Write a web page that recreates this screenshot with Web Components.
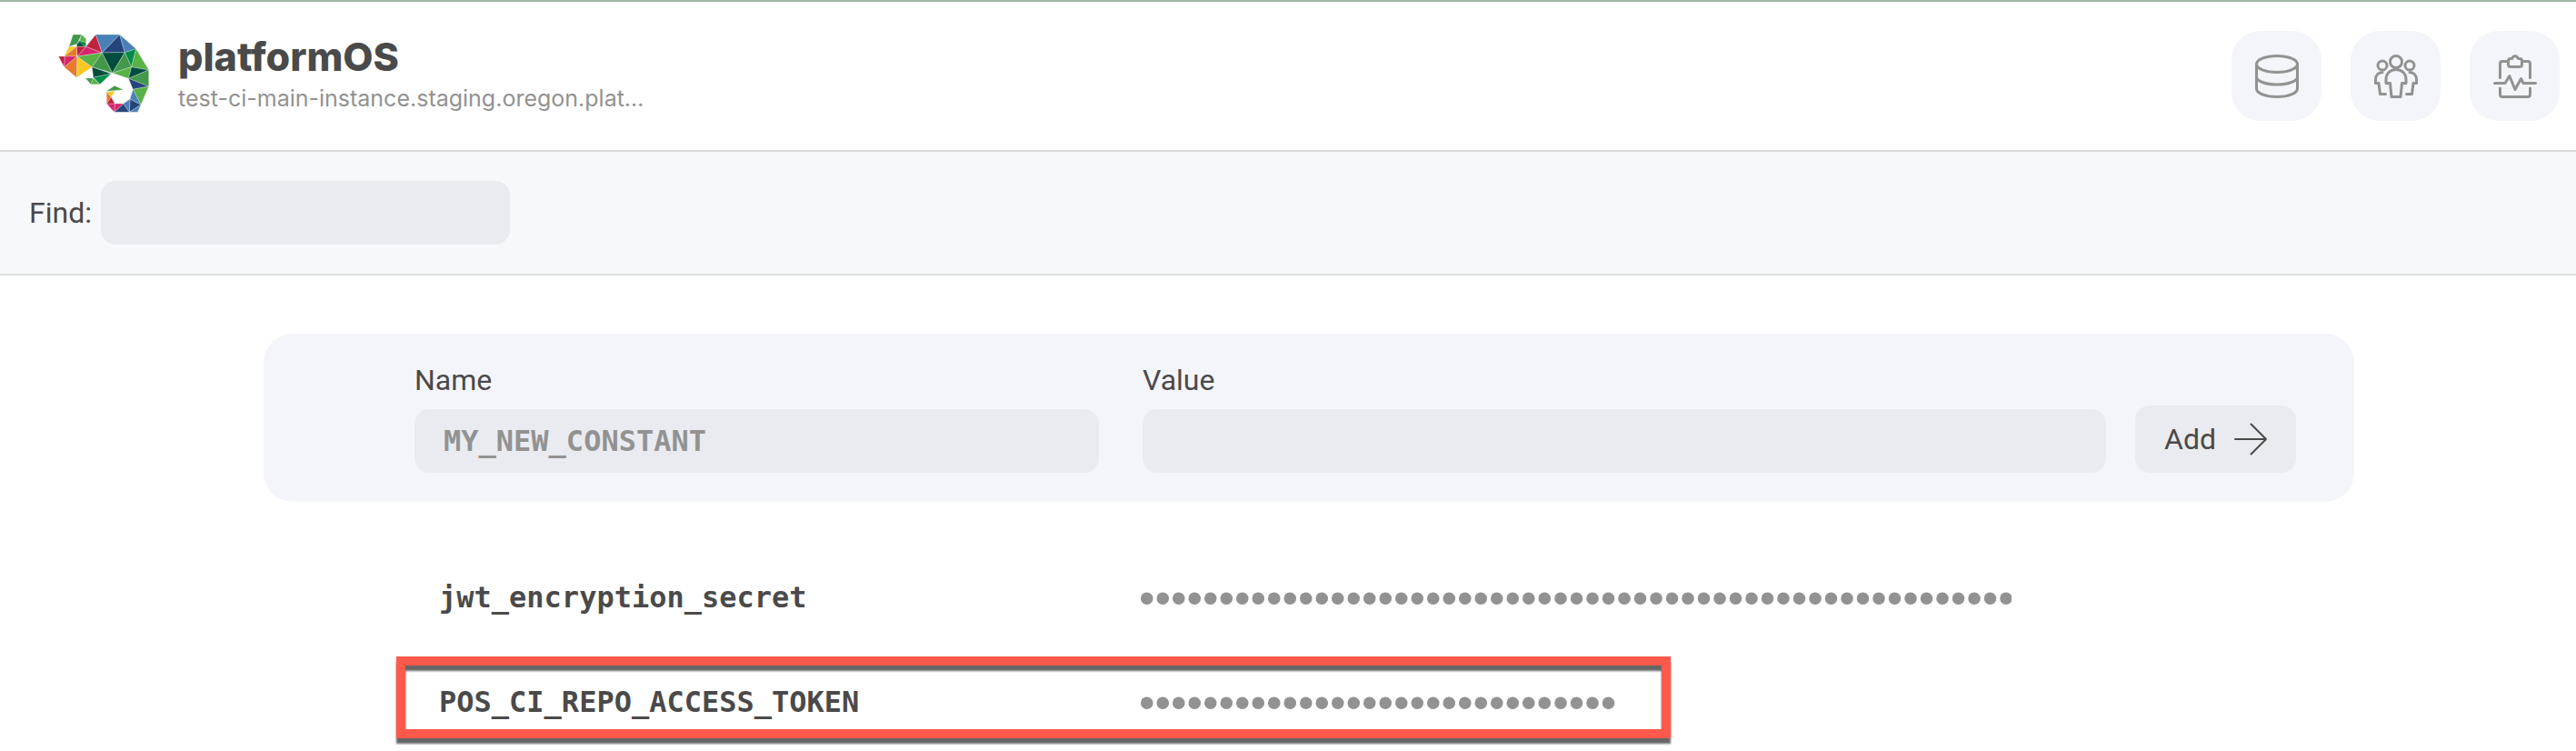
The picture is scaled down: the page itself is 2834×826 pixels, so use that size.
<!DOCTYPE html>
<html lang="en">
<head>
<meta charset="utf-8">
<title>platformOS constants</title>
<style>
  body {
    margin: 0;
    background: #fff;
    color: #4a4a4a;
    font: 32px/40px Roboto, "Liberation Sans", sans-serif;
  }
</style>
</head>
<body>
<constants-app></constants-app>

<template id="app">
  <style>
    :host { display: block; border-top: 2px solid #9fb8a4; }
    main { padding: 64px 244px 0 290px; }
    ul { margin: 0; padding: 48px 0 0; list-style: none; }
  </style>
  <app-header>
    <icon-button label="Database" icon="database"></icon-button>
    <icon-button label="Users" icon="users"></icon-button>
    <icon-button label="Logs" icon="logs"></icon-button>
  </app-header>
  <find-bar></find-bar>
  <main>
    <constant-form></constant-form>
    <ul>
      <constant-row name="jwt_encryption_secret" length="55"></constant-row>
      <constant-row name="POS_CI_REPO_ACCESS_TOKEN" length="30" marked></constant-row>
    </ul>
  </main>
</template>

<template id="header">
  <style>
    :host { display: block; }
    header {
      display: flex; align-items: center; justify-content: space-between;
      height: 163px; padding: 0 18px 0 50px;
      border-bottom: 2px solid #dadddb;
    }
    a { display: flex; align-items: center; gap: 16px; color: inherit; text-decoration: none; }
    svg { display: block; width: 130px; height: 120px; padding-bottom: 6px; stroke: #dfe8e0; stroke-width: 1; stroke-linejoin: round; }
    strong { display: block; font: 800 43px/48px Inter, sans-serif; }
    small { display: block; font: 25px/44px Inter, sans-serif; color: #929292; }
    nav { display: flex; gap: 32px; }
  </style>
  <header>
    <a href="#">
      <svg viewBox="0 0 390 360" aria-hidden="true">
        <path fill="#43984a" d="M91 51H119L105 82 78 91Z"/>
        <path fill="#58b246" d="M119 51L134 65V78L113 71Z"/>
        <path fill="#008c48" d="M113 71L134 78V91L105 78Z"/>
        <path fill="#004d3d" d="M105 80L115 76 130 91H103Z"/>
        <path fill="#f9c825" d="M78 91H103L62 123Z"/>
        <path fill="#e9792b" d="M103 91V123H62Z"/>
        <path fill="#c0223d" d="M103 91H134L105 123Z"/>
        <path fill="#d9236c" d="M134 91L187 111 105 123Z"/>
        <path fill="#c0223d" d="M166 51L187 111 134 91Z"/>
        <path fill="#c0223d" d="M43 123H64L62 158Z"/>
        <path fill="#d9236c" d="M64 123H105L62 158Z"/>
        <path fill="#e9792b" d="M105 123L62 158 103 193Z"/>
        <path fill="#f9c825" d="M105 123L154 158 103 193Z"/>
        <path fill="#4a80b8" d="M166 51H245L187 111Z"/>
        <path fill="#23457b" d="M245 51L262 110 187 111Z"/>
        <path fill="#4a80b8" d="M245 51L299 98 262 110Z"/>
        <path fill="#58b246" d="M105 123L187 111 154 158Z"/>
        <path fill="#43984a" d="M187 111L221 178 154 158Z"/>
        <path fill="#004d3d" d="M187 111L262 110 221 178Z"/>
        <path fill="#43984a" d="M262 110L284 158 221 178Z"/>
        <path fill="#008c48" d="M299 98L284 158 262 110Z"/>
        <path fill="#58b246" d="M299 98L341 168 284 158Z"/>
        <path fill="#58b246" d="M221 178L284 158 274 196Z"/>
        <path fill="#004d3d" d="M284 158L341 168 274 196Z"/>
        <path fill="#43984a" d="M341 168V222L274 196Z"/>
        <path fill="#23457b" d="M274 196L341 222 289 232Z"/>
        <path fill="#58b246" d="M341 222L289 232 315 283Z"/>
        <path fill="#4a80b8" d="M289 232L315 283 279 264Z"/>
        <path fill="#23457b" d="M279 264L315 283 277 307Z"/>
        <path fill="#4a80b8" d="M279 264L257 279 277 307Z"/>
        <path fill="#4a80b8" d="M315 283L304 307H277Z"/>
        <path fill="#23457b" d="M257 279L277 307H227Z"/>
        <path fill="#d9236c" d="M257 279L227 307 229 279Z"/>
        <path fill="#d9236c" d="M202 279H229L227 307Z"/>
        <path fill="#e9792b" d="M202 240L217 257 202 279Z"/>
        <path fill="#c0223d" d="M217 257L229 279H202Z"/>
        <path fill="#f9c825" d="M202 240L230 238 217 257Z"/>
        <path fill="#43984a" d="M202 238L228 220 257 233Z"/>
        <path fill="#004d3d" d="M154 158L217 180 158 193Z"/>
        <path fill="#008c48" d="M217 180L180 215 158 193Z"/>
        <path fill="#43984a" d="M132 195H158L150 215Z"/>
        <path fill="#58b246" d="M158 195L180 215H150Z"/>
      </svg>
      <span>
        <strong>platformOS</strong>
        <small>test-ci-main-instance.staging.oregon.plat…</small>
      </span>
    </a>
    <nav><slot></slot></nav>
  </header>
</template>

<template id="icon-button">
  <style>
    :host { display: block; }
    button {
      display: grid; place-items: center; width: 99px; height: 99px; padding: 0;
      border: 0; border-radius: 32px; background: #f4f5fb; color: #929292;
    }
    svg { display: none; width: 48px; height: 48px; fill: none; stroke: currentColor; stroke-width: 3; stroke-linecap: round; stroke-linejoin: round; }
    :host([icon="database"]) .database,
    :host([icon="users"]) .users,
    :host([icon="logs"]) .logs { display: block; }
  </style>
  <button type="button">
    <svg class="database" viewBox="0 0 48 48" aria-hidden="true">
      <ellipse cx="24" cy="10.500" rx="22.500" ry="9"/>
      <path d="M1.500 10.500V37.500C1.500 42.500 11.500 46.500 24 46.500S46.500 42.500 46.500 37.500V10.500M1.500 24.500C1.500 29.200 11.500 33 24 33S46.500 29.200 46.500 24.500"/>
    </svg>
    <svg class="users" viewBox="0 0 48 48" aria-hidden="true">
      <circle cx="24" cy="8" r="6.500"/>
      <circle cx="9" cy="12" r="5"/>
      <circle cx="39" cy="12" r="5"/>
      <path d="M24 16.500C17.500 16.500 13 21 13 27.500V31.500H17.500L19 46.500H29L30.500 31.500H35V27.500C35 21 30.500 16.500 24 16.500Z"/>
      <path d="M9 19.500C4.500 19.500 1.500 23 1.500 27.500V31.500H5L6.500 43.500H12.500M39 19.500C43.500 19.500 46.500 23 46.500 27.500V31.500H43L41.500 43.500H35.500"/>
    </svg>
    <svg class="logs" viewBox="0 0 48 48" aria-hidden="true">
      <path d="M16.500 7.500H10C8.500 7.500 7.500 8.500 7.500 10V25.500M31.500 7.500H38C39.500 7.500 40.500 8.500 40.500 10V25.500M7.500 37V44C7.500 45.500 8.500 46.500 10 46.500H38C39.500 46.500 40.500 45.500 40.500 44V37"/>
      <path d="M16.500 7C16.500 5.500 17.500 4.500 19 4.500H20.500L22 2.500C23 1.200 25 1.200 26 2.500L27.500 4.500H29C30.500 4.500 31.500 5.500 31.500 7V11C31.500 12.500 30.500 13.500 29 13.500H19C17.500 13.500 16.500 12.500 16.500 11Z"/>
      <path d="M1.500 31.500H13L17.800 23.500 24 38.500 30.500 26.500 33 31.500H46.500"/>
    </svg>
  </button>
</template>

<template id="find-bar">
  <style>
    :host { display: block; }
    form {
      display: flex; align-items: center; gap: 10px; height: 134px; padding: 0 32px;
      background: #f7f8fc; border-bottom: 2px solid #dadddb;
    }
    input {
      box-sizing: border-box; width: 450px; height: 70px; padding: 0 32px;
      border: 0; border-radius: 16px; background: #eaebf0; color: inherit; font: inherit;
    }
  </style>
  <form role="search">
    <label for="find">Find:</label>
    <input id="find" type="text">
  </form>
</template>

<template id="constant-form">
  <style>
    :host { display: block; }
    form {
      display: grid; grid-template-columns: 801fr 1092fr auto; align-items: end;
      padding: 31px 64px 32px 166px; border-radius: 32px; background: #f4f5fb;
    }
    div { display: grid; gap: 12px; }
    div:first-child { margin-right: 48px; }
    div:nth-child(2) { margin-right: 32px; }
    input {
      box-sizing: border-box; width: 100%; height: 70px; padding: 0 32px;
      border: 0; border-radius: 16px; background: #eaebf0; color: inherit;
      font: bold 32px/40px "DejaVu Sans Mono", monospace;
    }
    input::placeholder { color: #929292; opacity: 1; }
    button {
      display: flex; align-items: center; gap: 20px; height: 74px; padding: 0 32px;
      border: 0; border-radius: 16px; background: #eaebf0; color: inherit; font: inherit;
    }
    svg { width: 36px; height: 36px; fill: none; stroke: currentColor; stroke-width: 2; stroke-linecap: round; stroke-linejoin: round; }
  </style>
  <form>
    <div><label for="name">Name</label><input id="name" type="text" placeholder="MY_NEW_CONSTANT"></div>
    <div><label for="value">Value</label><input id="value" type="text"></div>
    <button type="button">Add
      <svg viewBox="0 0 36 36" aria-hidden="true"><path d="M1 18H35M18.500 1.500L35 18 18.500 34.500"/></svg>
    </button>
  </form>
</template>

<template id="constant-row">
  <style>
    :host { display: block; }
    li {
      position: relative; display: grid; grid-template-columns: 770px 960px;
      align-items: center; height: 115px; padding-left: 193px;
    }
    label { padding-bottom: 2px; font: bold 32px/40px "DejaVu Sans Mono", monospace; }
    input {
      box-sizing: border-box; width: 100%; height: 64px; padding: 0;
      border: 0; background: none; color: #929292;
      font: 50px/64px "Liberation Sans", sans-serif;
    }
    mark { display: none; }
    :host([marked]) mark {
      display: block; position: absolute; left: 146px; top: 7px;
      box-sizing: border-box; width: 1402px; height: 90px;
      border: 10px solid #ff594c; background: none; pointer-events: none;
      filter: drop-shadow(0 6px 1px rgba(0, 0, 0, .6));
    }
  </style>
  <li>
    <label for="secret"></label>
    <input id="secret" type="password" readonly>
    <mark></mark>
  </li>
</template>

<script>
  class TemplateElement extends HTMLElement {
    connectedCallback() {
      if (this.shadowRoot) return;
      const root = this.attachShadow({ mode: "open" });
      root.append(document.getElementById(this.constructor.template).content.cloneNode(true));
      this.render(root);
    }
    render() {}
  }

  customElements.define("icon-button", class extends TemplateElement {
    static template = "icon-button";
    render(root) {
      root.querySelector("button").setAttribute("aria-label", this.getAttribute("label"));
    }
  });
  customElements.define("app-header", class extends TemplateElement { static template = "header"; });
  customElements.define("find-bar", class extends TemplateElement { static template = "find-bar"; });
  customElements.define("constant-form", class extends TemplateElement { static template = "constant-form"; });
  customElements.define("constant-row", class extends TemplateElement {
    static template = "constant-row";
    render(root) {
      root.querySelector("label").textContent = this.getAttribute("name");
      root.querySelector("input").value = "x".repeat(Number(this.getAttribute("length")));
    }
  });
  customElements.define("constants-app", class extends TemplateElement { static template = "app"; });
</script>
</body>
</html>
